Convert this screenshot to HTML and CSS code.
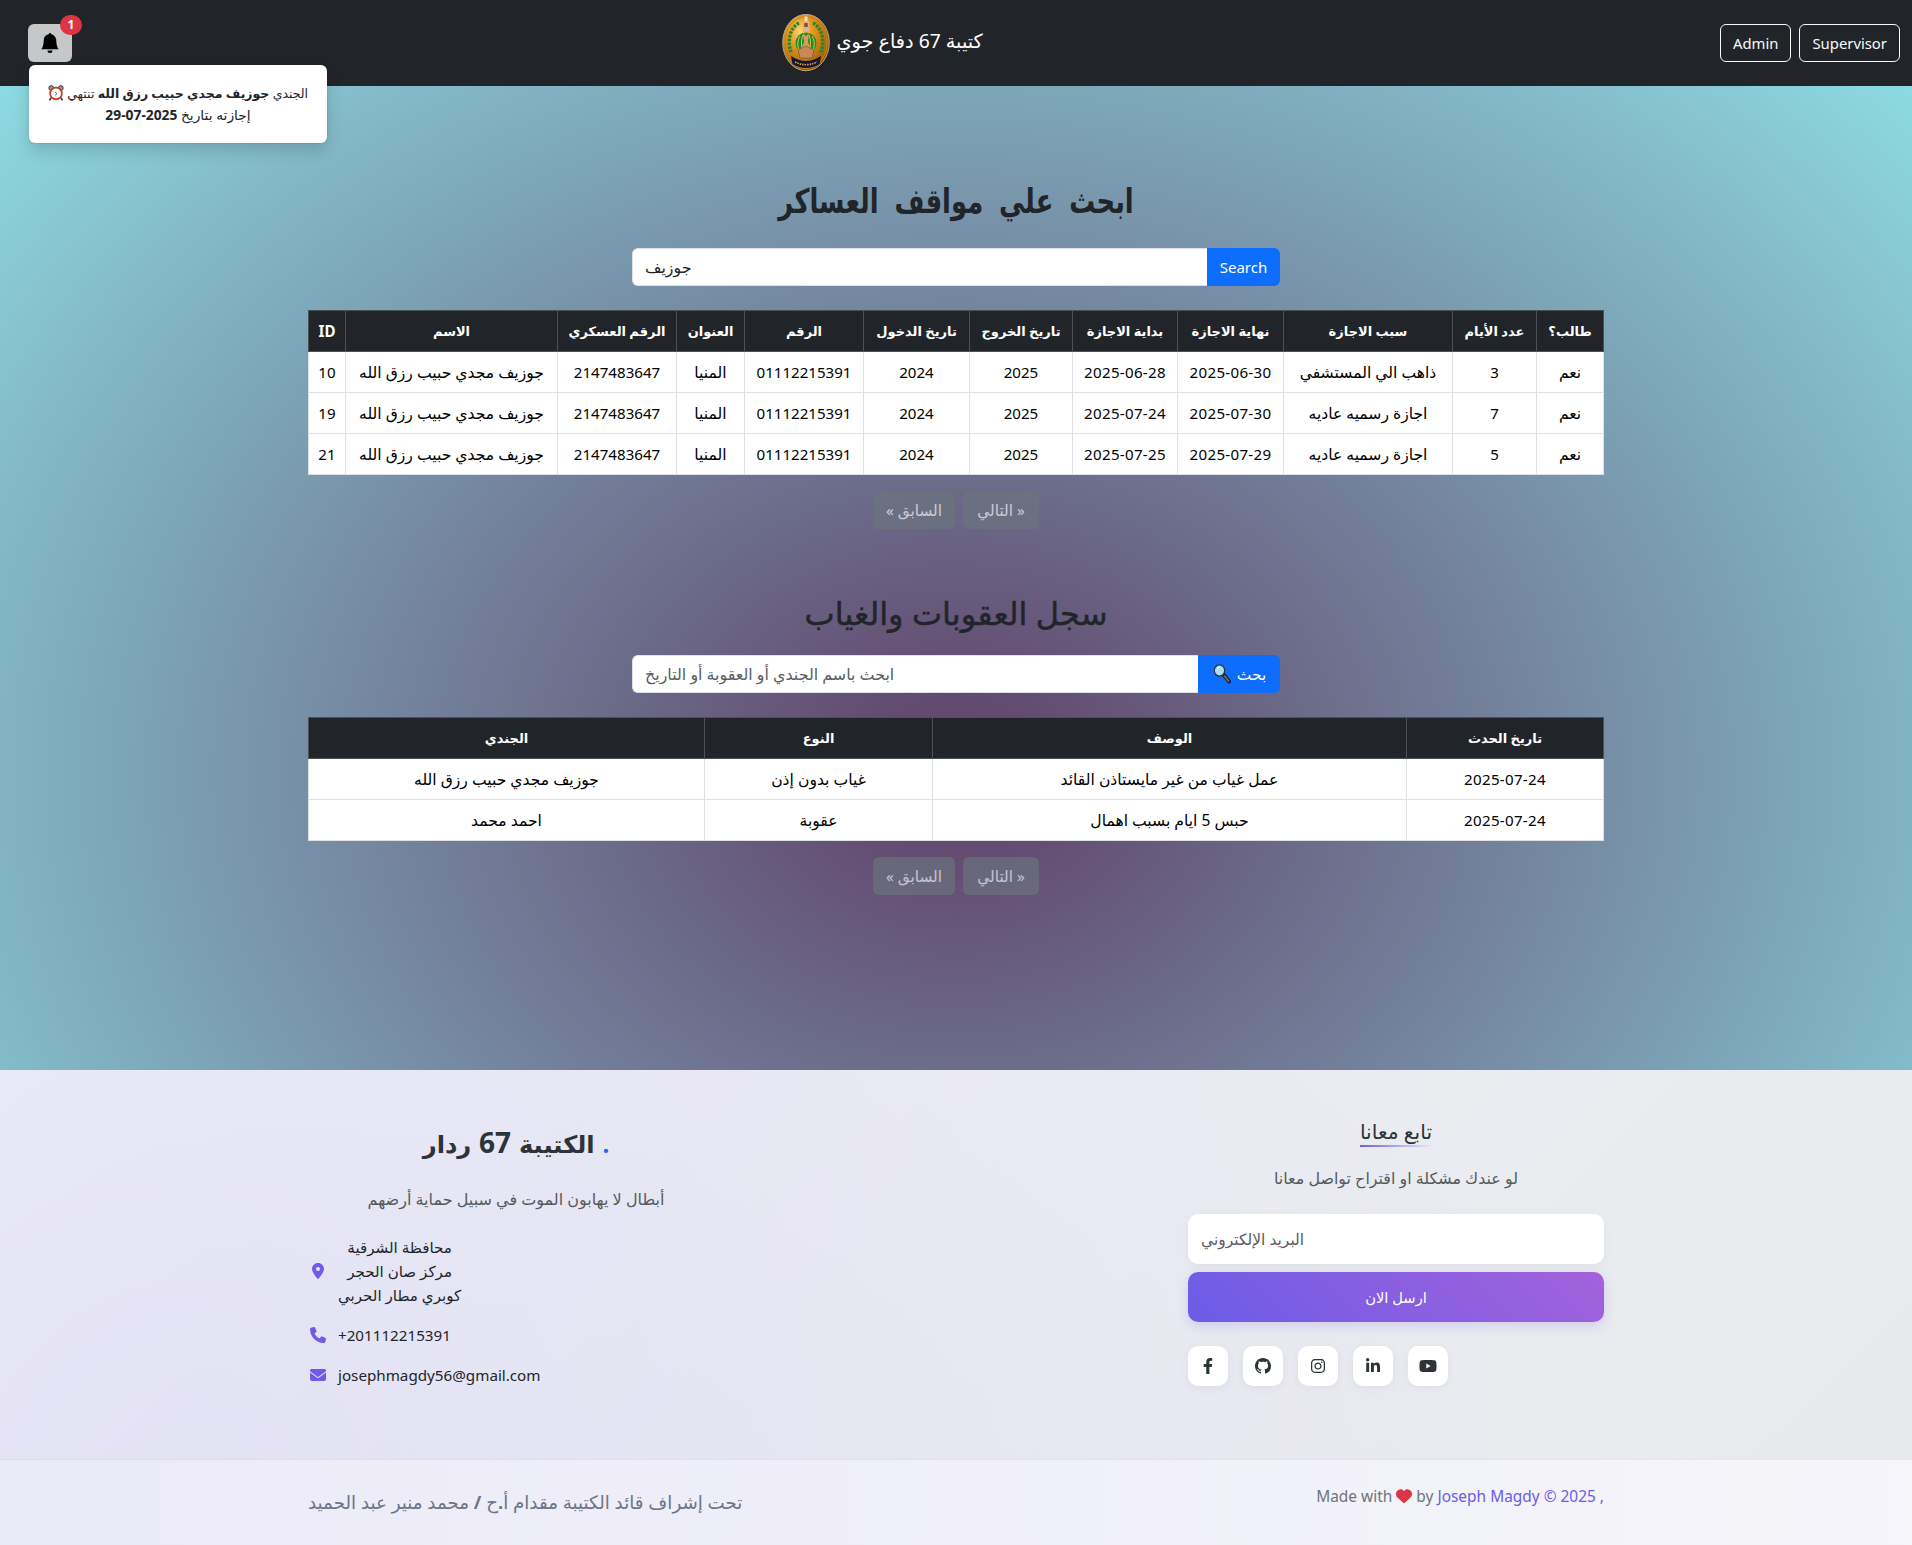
FILE: index.html
```html
<!DOCTYPE html>
<html lang="ar">
<head>
<meta charset="utf-8">
<title>كتيبة 67 دفاع جوي</title>
<link rel="stylesheet" href="styles.css">
</head>
<body>
<header class="navbar">
  <div class="notify">
    <button class="bell" type="button">
      <svg viewBox="0 0 16 16" width="20" height="20"><path d="M8 16a2 2 0 0 0 2-2H6a2 2 0 0 0 2 2m.995-14.901a1 1 0 1 0-1.99 0A5 5 0 0 0 3 6c0 1.098-.5 6-2 7h14c-1.5-1-2-5.902-2-7 0-2.42-1.72-4.44-4.005-4.901"/></svg>
    </button>
    <span class="badge">1</span>
    <div class="popup">
      <div class="popup-line"><svg class="clock" viewBox="0 0 16 16" width="16" height="16"><path d="M3 13l-1.6 2.4M13 13l1.6 2.4" stroke="#333" stroke-width="1.6"/><circle cx="3.2" cy="3" r="2.4" fill="#999" stroke="#222" stroke-width=".8"/><circle cx="12.8" cy="3" r="2.4" fill="#999" stroke="#222" stroke-width=".8"/><circle cx="8" cy="8.5" r="5.9" fill="#fff" stroke="#c8371f" stroke-width="1.7"/><path d="M7 7l2 1.7-2 1.6" fill="none" stroke="#444" stroke-width=".8"/></svg>
      الجندي <strong>جوزيف مجدي حبيب رزق الله</strong> تنتهي</div>
      <div class="popup-line popup-date">إجازته بتاريخ <strong>2025-07-29</strong></div>
    </div>
  </div>
  <div class="brand">
    <svg viewBox="0 0 48 58" width="48" height="58">
      <defs><radialGradient id="gold" cx=".38" cy=".3" r=".75"><stop offset="0" stop-color="#ffd27a"/><stop offset=".35" stop-color="#e59a1c"/><stop offset="1" stop-color="#8e5606"/></radialGradient></defs>
      <ellipse cx="24.8" cy="29.6" rx="23" ry="28.2" fill="#111"/>
      <ellipse cx="24" cy="28.6" rx="23.3" ry="28.2" fill="url(#gold)" stroke="#b9a88c" stroke-width="1"/>
      <ellipse cx="24" cy="28.6" rx="21" ry="26" fill="none" stroke="#c98312" stroke-width="1"/>
      <path d="M17 9C8 14 5 26 9 38M31 9c9 5 12 17 8 29" fill="none" stroke="#27852c" stroke-width="3.4" stroke-dasharray="2.6 1.2"/>
      <circle cx="24" cy="29" r="10.5" fill="#1f8a35"/>
      <path d="M18 22c-3 5-3 11 0 15M21 21c-2 5-2 11 0 16M30 22c3 5 3 11 0 15M27 21c2 5 2 11 0 16" fill="none" stroke="#e4c33d" stroke-width="1"/>
      <path d="M21 7h6v11h-6z" fill="#e0b48a"/><path d="M22.5 2.5h3V7h-3z" fill="#f3dcc0"/><path d="M22.2 9h3.6v4h-3.6z" fill="#8e4d36"/>
      <path d="M21 19l3 3 3-3-1 9 3 7H19l3-7z" fill="#d99a57"/>
      <path d="M16 36l8-4 8 4-2 8H18z" fill="#c58a58" stroke="#8a5a30" stroke-width=".8"/>
      <path d="M9 42q15 10 30 0l-1.5 8q-13.5 8-27 0z" fill="#15153a"/>
      <path d="M13 48q11 5.5 22 0" fill="none" stroke="#d8a63a" stroke-width="1.7" stroke-dasharray="1.5 1"/>
    </svg>
    <span class="brand-name">كتيبة 67 دفاع جوي</span>
  </div>
  <nav class="roles"><a class="role">Admin</a><a class="role">Supervisor</a></nav>
</header>

<main class="main">
  <section class="block">
    <h1 class="title title-main">ابحث علي مواقف العساكر</h1>
    <div class="search"><div class="field value">جوزيف</div><button class="go" type="button">Search</button></div>
    <table class="grid soldiers">
      <thead><tr><th class="n">ID</th><th>الاسم</th><th>الرقم العسكري</th><th>العنوان</th><th>الرقم</th><th>تاريخ الدخول</th><th>تاريخ الخروج</th><th>بداية الاجازة</th><th>نهاية الاجازة</th><th>سبب الاجازة</th><th>عدد الأيام</th><th>طالب؟</th></tr></thead>
      <tbody>
        <tr><td class="n">10</td><td>جوزيف مجدي حبيب رزق الله</td><td class="n">2147483647</td><td>المنيا</td><td class="n">01112215391</td><td class="n">2024</td><td class="n">2025</td><td class="n date">2025-06-28</td><td class="n date">2025-06-30</td><td>ذاهب الي المستشفي</td><td class="n">3</td><td>نعم</td></tr>
        <tr><td class="n">19</td><td>جوزيف مجدي حبيب رزق الله</td><td class="n">2147483647</td><td>المنيا</td><td class="n">01112215391</td><td class="n">2024</td><td class="n">2025</td><td class="n date">2025-07-24</td><td class="n date">2025-07-30</td><td>اجازة رسميه عاديه</td><td class="n">7</td><td>نعم</td></tr>
        <tr><td class="n">21</td><td>جوزيف مجدي حبيب رزق الله</td><td class="n">2147483647</td><td>المنيا</td><td class="n">01112215391</td><td class="n">2024</td><td class="n">2025</td><td class="n date">2025-07-25</td><td class="n date">2025-07-29</td><td>اجازة رسميه عاديه</td><td class="n">5</td><td>نعم</td></tr>
      </tbody>
    </table>
    <div class="pager"><span class="page prev">« السابق</span><span class="page next">التالي »</span></div>
  </section>

  <section class="block">
    <h2 class="title title-log">سجل العقوبات والغياب</h2>
    <div class="search"><div class="field hint">ابحث باسم الجندي أو العقوبة أو التاريخ</div><button class="go go-log" type="button"><svg viewBox="0 0 20 20" width="20" height="20"><path d="M11.5 10.5l5.5 7" stroke="#222" stroke-width="4" stroke-linecap="round"/><path d="M12.5 12l4 5" stroke="#777" stroke-width="1.5" stroke-linecap="round"/><ellipse cx="7.5" cy="6.5" rx="5.2" ry="5.6" fill="#a9dcf8" stroke="#333" stroke-width="1.3"/><path d="M5 5.5q1-2.5 3-2.5" stroke="#fff" stroke-width="1.2" fill="none"/></svg><span>بحث</span></button></div>
    <table class="grid log">
      <thead><tr><th>الجندي</th><th>النوع</th><th>الوصف</th><th>تاريخ الحدث</th></tr></thead>
      <tbody>
        <tr><td>جوزيف مجدي حبيب رزق الله</td><td>غياب بدون إذن</td><td>عمل غياب من غير مايستاذن القائد</td><td class="n date">2025-07-24</td></tr>
        <tr><td>احمد محمد</td><td>عقوبة</td><td>حبس 5 ايام بسبب اهمال</td><td class="n date">2025-07-24</td></tr>
      </tbody>
    </table>
    <div class="pager"><span class="page prev">« السابق</span><span class="page next">التالي »</span></div>
  </section>
</main>

<footer class="footer">
  <div class="footer-top">
    <div class="about">
      <h3 class="about-title">الكتيبة <span class="count">67</span> ردار <span class="dot">.</span></h3>
      <p class="about-text">أبطال لا يهابون الموت في سبيل حماية أرضهم</p>
      <ul class="contact">
        <li class="place"><svg viewBox="0 0 384 512" width="16" height="16"><path d="M215.7 499.2C267 435 384 279.4 384 192C384 86 298 0 192 0S0 86 0 192c0 87.4 117 243 168.3 307.2c12.3 15.3 35.1 15.3 47.4 0zM192 128a64 64 0 1 1 0 128 64 64 0 1 1 0-128z"/></svg><span class="address">محافظة الشرقية<br>مركز صان الحجر<br>كوبري مطار الحربي</span></li>
        <li><svg viewBox="0 0 512 512" width="16" height="16"><path d="M164.9 24.6c-7.7-18.6-28-28.5-47.4-23.2l-88 24C12.1 30.2 0 46 0 64C0 311.4 200.6 512 448 512c18 0 33.8-12.1 38.6-29.5l24-88c5.3-19.4-4.6-39.7-23.2-47.4l-96-40c-16.3-6.8-35.2-2.1-46.3 11.6L304.7 368C234.3 334.7 177.3 277.7 144 207.3L193.3 167c13.7-11.2 18.4-30 11.6-46.3l-40-96z"/></svg><span>+201112215391</span></li>
        <li><svg viewBox="0 0 512 512" width="16" height="16"><path d="M48 64C21.5 64 0 85.5 0 112c0 15.1 7.1 29.3 19.2 38.4L236.8 313.6c11.4 8.5 27 8.5 38.4 0L492.8 150.4c12.1-9.1 19.2-23.3 19.2-38.4c0-26.5-21.5-48-48-48H48zM0 176V384c0 35.3 28.7 64 64 64H448c35.3 0 64-28.7 64-64V176L294.4 339.2c-22.8 17.1-54 17.1-76.8 0L0 176z"/></svg><span class="mail">josephmagdy56@gmail.com</span></li>
      </ul>
    </div>
    <div class="follow">
      <h4 class="follow-title">تابع معانا</h4>
      <p class="follow-text">لو عندك مشكلة او اقتراح تواصل معانا</p>
      <div class="email">البريد الإلكتروني</div>
      <button class="send" type="button">ارسل الان</button>
      <div class="social">
        <a><svg viewBox="0 0 320 512" width="10" height="16"><path d="M279.14 288l14.22-92.66h-88.91v-60.13c0-25.35 12.42-50.06 52.24-50.06h40.42V6.26S260.43 0 225.36 0c-73.22 0-121.08 44.38-121.08 124.72v70.62H22.89V288h81.39v224h100.17V288z"/></svg></a>
        <a><svg viewBox="0 0 16 16" width="16" height="16"><path d="M8 0C3.58 0 0 3.58 0 8c0 3.54 2.29 6.53 5.47 7.59.4.07.55-.17.55-.38 0-.19-.01-.82-.01-1.49-2.01.37-2.53-.49-2.69-.94-.09-.23-.48-.94-.82-1.13-.28-.15-.68-.52-.01-.53.63-.01 1.08.58 1.23.82.72 1.21 1.87.87 2.33.66.07-.52.28-.87.51-1.07-1.78-.2-3.64-.89-3.64-3.95 0-.87.31-1.59.82-2.15-.08-.2-.36-1.02.08-2.12 0 0 .67-.21 2.2.82.64-.18 1.32-.27 2-.27s1.36.09 2 .27c1.53-1.04 2.2-.82 2.2-.82.44 1.1.16 1.92.08 2.12.51.56.82 1.27.82 2.15 0 3.07-1.87 3.75-3.65 3.95.29.25.54.73.54 1.48 0 1.07-.01 1.93-.01 2.2 0 .21.15.46.55.38A8.01 8.01 0 0 0 16 8c0-4.42-3.58-8-8-8"/></svg></a>
        <a><svg viewBox="0 0 448 512" width="14" height="16"><path d="M224.1 141c-63.6 0-114.9 51.3-114.9 114.9s51.3 114.9 114.9 114.9S339 319.5 339 255.9 287.7 141 224.1 141zm0 189.600c-41.1 0-74.7-33.5-74.7-74.7s33.5-74.7 74.7-74.7 74.7 33.5 74.7 74.7-33.6 74.7-74.7 74.7zm146.4-194.3c0 14.9-12 26.8-26.8 26.8-14.9 0-26.8-12-26.8-26.8s12-26.8 26.8-26.8 26.8 12 26.8 26.8zm76.1 27.2c-1.7-35.9-9.9-67.7-36.2-93.9-26.2-26.2-58-34.4-93.9-36.2-37-2.1-147.9-2.1-184.9 0-35.8 1.7-67.6 9.9-93.9 36.1s-34.4 58-36.2 93.9c-2.1 37-2.1 147.9 0 184.9 1.7 35.9 9.9 67.7 36.2 93.9s58 34.4 93.9 36.2c37 2.1 147.9 2.1 184.9 0 35.9-1.7 67.7-9.9 93.9-36.2 26.2-26.2 34.4-58 36.2-93.9 2.1-37 2.1-147.8 0-184.8zM398.8 388c-7.8 19.6-22.9 34.7-42.6 42.6-29.5 11.7-99.5 9-132.1 9s-102.7 2.6-132.1-9c-19.6-7.8-34.7-22.9-42.6-42.6-11.7-29.5-9-99.5-9-132.1s-2.6-102.7 9-132.1c7.8-19.6 22.9-34.7 42.6-42.6 29.5-11.7 99.5-9 132.1-9s102.7-2.6 132.1 9c19.6 7.8 34.7 22.9 42.6 42.6 11.7 29.5 9 99.5 9 132.1s2.7 102.7-9 132.1z"/></svg></a>
        <a><svg viewBox="0 0 448 512" width="14" height="16"><path d="M100.28 448H7.4V148.9h92.88zM53.79 108.1C24.09 108.1 0 83.5 0 53.8a53.79 53.79 0 0 1 107.58 0c0 29.7-24.1 54.3-53.79 54.3zM447.9 448h-92.68V302.4c0-34.7-.7-79.2-48.29-79.2-48.29 0-55.69 37.7-55.69 76.7V448h-92.78V148.9h89.08v40.8h1.3c12.4-23.5 42.69-48.3 87.88-48.3 94 0 111.28 61.9 111.28 142.3V448z"/></svg></a>
        <a><svg viewBox="0 0 576 512" width="18" height="16"><path d="M549.655 124.083c-6.281-23.65-24.787-42.276-48.284-48.597C458.781 64 288 64 288 64S117.22 64 74.629 75.486c-23.497 6.322-42.003 24.947-48.284 48.597-11.412 42.867-11.412 132.305-11.412 132.305s0 89.438 11.412 132.305c6.281 23.65 24.787 41.5 48.284 47.821C117.22 448 288 448 288 448s170.78 0 213.371-11.486c23.497-6.321 42.003-24.171 48.284-47.821 11.412-42.867 11.412-132.305 11.412-132.305s0-89.438-11.412-132.305zm-317.51 213.508V175.185l142.739 81.205-142.739 81.201z"/></svg></a>
      </div>
    </div>
  </div>
  <div class="footer-bottom">
    <div class="bottom-inner">
      <p class="command">تحت إشراف قائد الكتيبة مقدام أ<b>.</b>ح <b>/</b> محمد منير عبد الحميد</p>
      <p class="credit">Made with <svg viewBox="0 0 512 512" width="16" height="16"><path d="M47.6 300.4L228.3 469.1c7.5 7 17.4 10.9 27.7 10.9s20.2-3.9 27.7-10.9L464.4 300.4c30.4-28.3 47.6-68 47.6-109.5v-5.8c0-69.9-50.5-129.5-119.4-141C347 36.5 300.6 51.4 268 84L256 96 244 84c-32.6-32.6-79-47.5-124.6-39.9C50.5 55.6 0 115.2 0 185.1v5.8c0 41.5 17.2 81.2 47.6 109.5z"/></svg> by <a>Joseph Magdy © 2025 ,</a></p>
    </div>
  </div>
</footer>
</body>
</html>
```
FILE: styles.css
```css
* { box-sizing: border-box; }
html, body { margin: 0; }
body {
  min-height: 1545px;
  font-family: "Noto Sans", "DejaVu Sans", sans-serif;
  font-size: 15px;
  line-height: 24px;
  color: #212529;
  background: radial-gradient(#5f4068 0%, #8fe3e9 100%);
}
h1, h2, h3, h4, p, ul { margin: 0; padding: 0; }
button { font: inherit; border: 0; padding: 0; }
svg { display: block; flex: none; }

.navbar {
  height: 86px;
  padding: 0 12px 0 28px;
  background: #212529;
  display: flex;
  justify-content: space-between;
  align-items: center;
}
.notify { position: relative; width: 44px; }
.bell {
  width: 44px;
  height: 38px;
  background: #c6c7c9;
  border-radius: 6px;
  display: flex;
  align-items: center;
  justify-content: center;
}
.badge {
  position: absolute;
  left: 32px;
  top: -9px;
  width: 22px;
  height: 20px;
  border-radius: 10px;
  background: #dc3545;
  color: #fff;
  font-size: 12px;
  font-weight: 700;
  line-height: 20px;
  text-align: center;
}
.popup {
  position: absolute;
  left: 1px;
  top: 41px;
  width: 298px;
  height: 78px;
  padding: 18px 16px;
  background: #fff;
  border-radius: 6px;
  box-shadow: 0 8px 16px rgba(0, 0, 0, .15), 0 0 2px rgba(0, 0, 0, .2);
  text-align: center;
  white-space: nowrap;
}
.popup-line { font-size: 12.5px; line-height: 21px; height: 21px; }
.popup-date { font-size: 13.8px; line-height: 22px; }
.clock { display: inline-block; vertical-align: -3px; }
.brand { display: flex; align-items: center; gap: 6px; width: 227px; }
.brand-name { color: #fff; font-size: 19.3px; padding-bottom: 4px; white-space: nowrap; }
.roles { display: flex; justify-content: flex-end; gap: 8px; }
.role {
  height: 38px;
  padding: 0 12px;
  border: 1px solid #f8f9fa;
  border-radius: 6px;
  color: #f8f9fa;
  font-size: 14.85px;
  line-height: 36px;
}

.main { width: 1296px; height: 984px; margin: 0 auto; padding-top: 90px; }
.block { height: 407px; }
.title { text-align: center; white-space: nowrap; font-weight: 500; }
.title-main { height: 72px; line-height: 48px; font-weight: 700; font-size: 34px; word-spacing: 12px; transform: scaleX(.76); }
.title-log { height: 72px; line-height: 60px; font-size: 32px; -webkit-text-stroke: .5px; }
.search { width: 648px; height: 38px; margin: 0 auto 24px; display: flex; }
.field {
  flex: 1;
  padding: 0 12px;
  background: #fff;
  border: 1px solid #dee2e6;
  border-right: 0;
  border-radius: 6px 0 0 6px;
  line-height: 36px;
}
.value, .hint { font-size: 15.9px; }
.hint { color: #595c5f; }
.go { width: 73px; background: #0d6efd; color: #fff; border-radius: 0 6px 6px 0; }
.go-log { width: 82px; display: flex; align-items: center; justify-content: center; gap: 5px; font-size: 15.5px; }

.grid {
  width: 1296px;
  table-layout: fixed;
  border-collapse: collapse;
  background: #fff;
  color: #000;
  text-align: center;
  font-size: 15.6px;
}
.grid th, .grid td { height: 41px; padding: 0; border: 1px solid #dee2e6; white-space: nowrap; }
.grid th { background: #212529; color: #fff; border-color: #4d5154; font-weight: 700; font-size: 13px; }
.grid .n { font-size: 15.1px; }
.grid .date { letter-spacing: .3px; }
.soldiers th:nth-child(1) { width: 37px; }
.soldiers th:nth-child(2) { width: 212px; }
.soldiers th:nth-child(3) { width: 119px; }
.soldiers th:nth-child(4) { width: 68px; }
.soldiers th:nth-child(5) { width: 119px; }
.soldiers th:nth-child(6) { width: 106px; }
.soldiers th:nth-child(7) { width: 103px; }
.soldiers th:nth-child(8) { width: 105px; }
.soldiers th:nth-child(9) { width: 106px; }
.soldiers th:nth-child(10) { width: 169px; }
.soldiers th:nth-child(11) { width: 84px; }
.log th:nth-child(1) { width: 396px; }
.log th:nth-child(2) { width: 228px; }
.log th:nth-child(3) { width: 474px; }

.pager { display: flex; justify-content: center; gap: 8px; margin-top: 16px; }
.page {
  height: 38px;
  line-height: 38px;
  border-radius: 6px;
  background: #6c757d;
  color: #fff;
  opacity: .65;
  text-align: center;
  font-size: 15.3px;
}
.prev { width: 82px; }
.next { width: 76px; }

.footer {
  background:
    radial-gradient(circle at 10% 90%, rgba(108, 92, 231, .09), rgba(108, 92, 231, 0) 75%),
    linear-gradient(135deg, #f1f1f8, #e7e9ec);
}
.footer-top { width: 1296px; height: 389px; margin: 0 auto; display: flex; justify-content: space-between; }
.about { width: 416px; padding-top: 52px; }
.about-title { height: 58px; line-height: 40px; text-align: center; font-size: 24.2px; font-weight: 700; color: #2d3436; word-spacing: 1.5px; }
.count { font-size: 28px; }
.dot { color: #0d6efd; }
.about-text { height: 55px; line-height: 38px; text-align: center; font-size: 16px; font-weight: 500; color: #55595d; }
.contact { list-style: none; }
.contact li { display: flex; align-items: center; gap: 12px; padding-left: 2px; margin-bottom: 16px; font-size: 15.2px; }
.contact svg { fill: #6c5ce7; }
.contact .address { text-align: center; font-size: 15.1px; }
.follow { width: 416px; padding-top: 48px; display: flex; flex-direction: column; }
.follow-title {
  align-self: center;
  height: 29px;
  line-height: 26px;
  font-size: 20.3px;
  font-weight: 500;
  color: #2d3436;
  border-bottom: 2px solid;
  border-image: linear-gradient(90deg, #6c5ce7, transparent) 1;
}
.follow-text { margin: 19px 0 24px; text-align: center; color: #55595d; font-size: 15.9px; }
.email {
  height: 50px;
  padding: 0 13px;
  line-height: 50px;
  background: #fff;
  border-radius: 10px;
  color: #595c5f;
  font-size: 15.5px;
  box-shadow: 0 2px 10px rgba(0, 0, 0, .05);
}
.send {
  height: 50px;
  margin: 8px 0 24px;
  border-radius: 10px;
  color: #fff;
  font-size: 14.7px;
  background: linear-gradient(45deg, #6c5ce7, #a362db);
  box-shadow: 0 4px 12px rgba(108, 92, 231, .2);
}
.social { display: flex; gap: 15px; }
.social a {
  width: 40px;
  height: 40px;
  border-radius: 10px;
  background: #fff;
  display: flex;
  align-items: center;
  justify-content: center;
  box-shadow: 0 2px 10px rgba(0, 0, 0, .05);
}
.social svg { fill: #2d3436; }
.footer-bottom { height: 86px; border-top: 1px solid rgba(108, 92, 231, .1); background: linear-gradient(90deg, #ebeaf7, #f5f5fa); }
.bottom-inner { width: 1296px; margin: 0 auto; padding-top: 24px; display: flex; justify-content: space-between; color: #6c757d; }
.command { font-size: 18.3px; line-height: 36px; color: #6b7488; }
.credit { font-size: 15.45px; }
.credit svg { display: inline-block; vertical-align: -2px; fill: #dc3545; }
.credit a { color: #6c5ce7; }
```
